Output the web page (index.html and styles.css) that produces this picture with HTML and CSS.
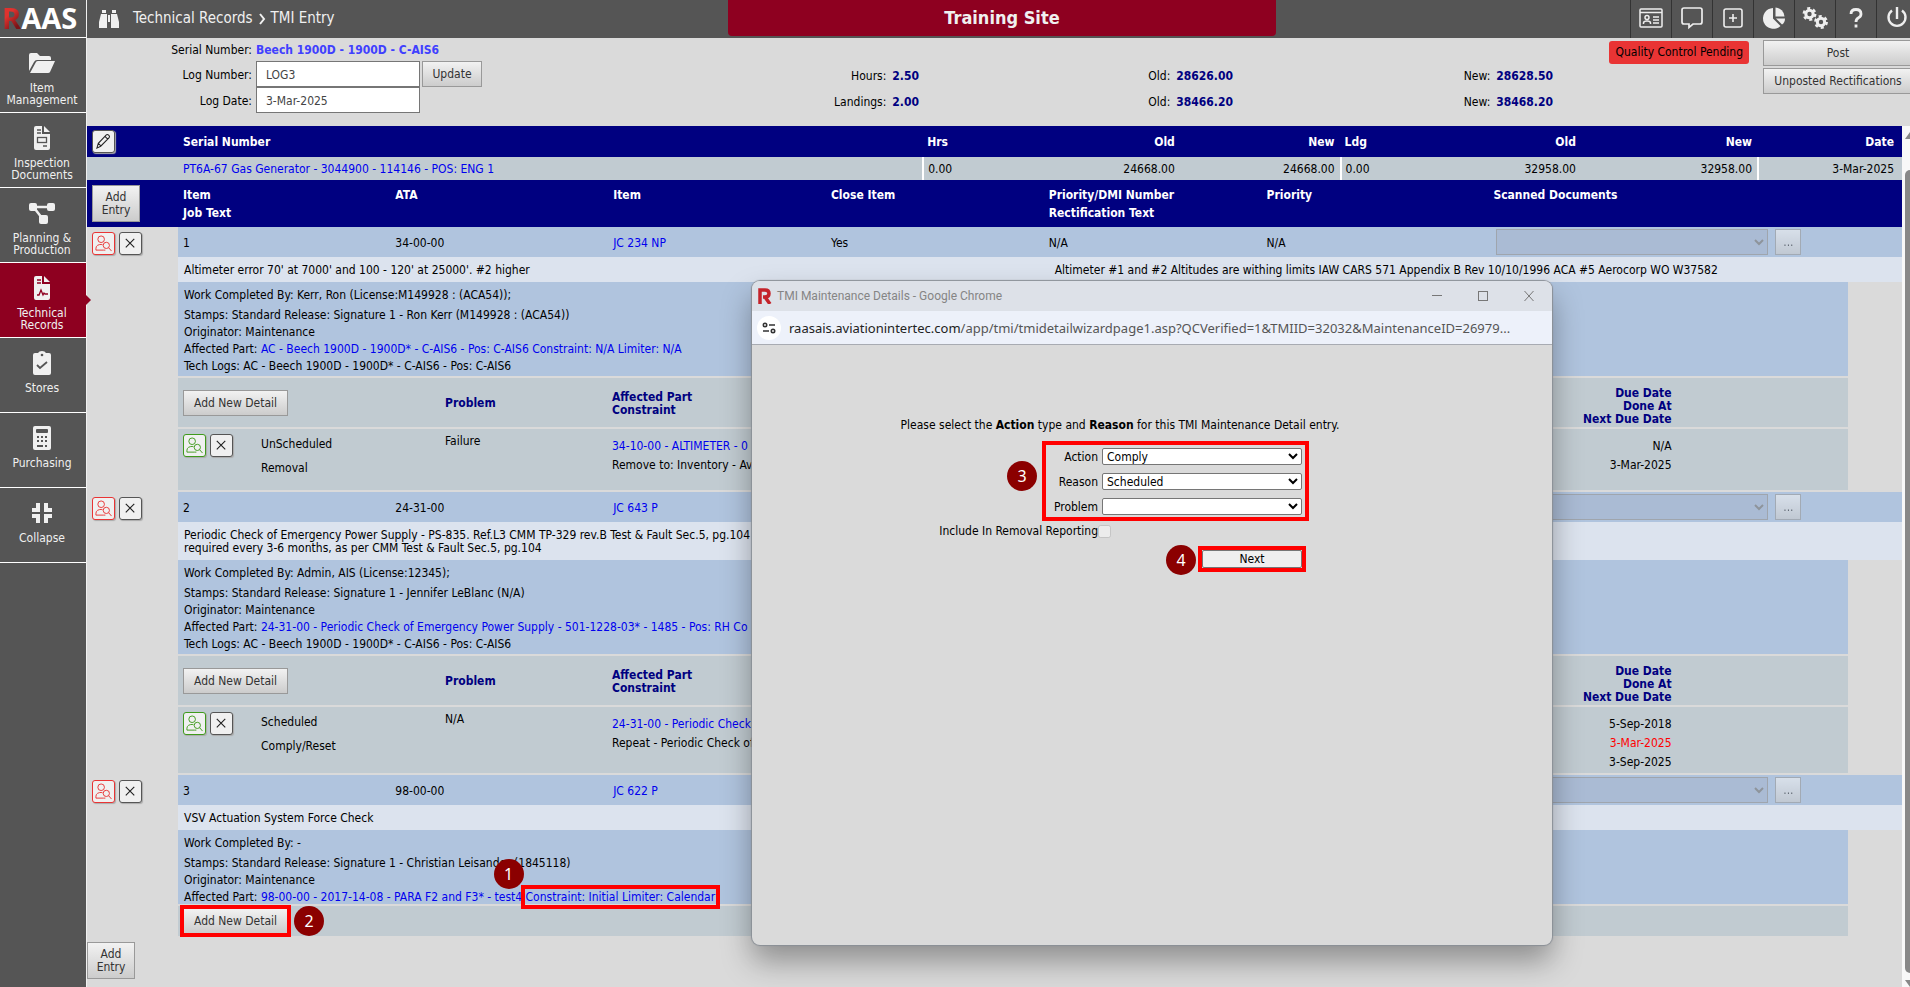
FILE: index.html
```html
<!DOCTYPE html>
<html lang="en">
<head>
<meta charset="utf-8">
<title>TMI Entry</title>
<link rel="stylesheet" href="styles.css">
</head>
<body>
<svg class="defs" aria-hidden="true">
  <symbol id="i-person" viewBox="0 0 18 18"><g fill="none" stroke="currentColor" stroke-width="1"><circle cx="6.500" cy="4.500" r="3.500"/><path d="M9 16H1v-2c0-3 3-4 5.500-4l1.500.3"/><circle cx="12" cy="11" r="3.300"/><path d="M14.500 13.500l3 3.500"/><path d="M9 16h2"/></g></symbol>
  <symbol id="i-x" viewBox="0 0 18 18"><path d="M4 4l9 9M13 4l-9 9" fill="none" stroke="#222" stroke-width="1.200"/></symbol>
</svg>
<div class="app">
  <nav class="side">
    <a class="logo" href="#"><span>R</span>AAS</a>
    <a class="nav" href="#"><svg viewBox="0 0 28 24"><path d="M1 20V4q0-2 2-2h6l3 3h9q2 0 2 2v2H9q-2 0-3 2z"/><path d="M2 22l6-11q.5-1 2-1h17l-5 11q-.5 1-2 1z"/></svg>Item<br>Management</a>
    <a class="nav" href="#"><svg viewBox="0 0 28 24"><path d="M8 0h6v8h8v14q0 2-2 2H8q-2 0-2-2V2q0-2 2-2z"/><path d="M16 0v6h6z"/><path d="M9 4h4M9 7h4M15 20h4" stroke="#555" stroke-width="1.300"/><rect x="9.500" y="11.500" width="9" height="5" fill="none" stroke="#555" stroke-width="1.300"/></svg>Inspection<br>Documents</a>
    <a class="nav" href="#"><svg viewBox="0 0 28 24"><rect x="1" y="2" width="8" height="8" rx="2"/><rect x="19" y="2" width="8" height="8" rx="2"/><rect x="11" y="14" width="9" height="9" rx="2"/><path d="M8 6h12M7 8l7 9" stroke="#f0f0f0" stroke-width="2.500"/></svg>Planning &amp;<br>Production</a>
    <a class="nav active" href="#"><svg viewBox="0 0 28 24"><path d="M8 0h6v8h8v14q0 2-2 2H8q-2 0-2-2V2q0-2 2-2z"/><path d="M16 0v6h6z"/><path d="M9 4h4M9 7h4" stroke="#8e0020" stroke-width="1.300"/><path d="M9 19h2l2-5 2 5 1-2 1 1h3" fill="none" stroke="#8e0020" stroke-width="1.300"/></svg>Technical<br>Records</a>
    <a class="nav" href="#"><svg viewBox="0 0 28 24"><path d="M7 2h3q1-2 4-2t4 2h3q2 0 2 2v18q0 2-2 2H7q-2 0-2-2V4q0-2 2-2z"/><circle cx="14" cy="4" r="1.300" fill="#555"/><path d="M9 14l3 3 7-6" fill="none" stroke="#555" stroke-width="1.800"/></svg>Stores</a>
    <a class="nav" href="#"><svg viewBox="0 0 28 24"><rect x="5" y="0" width="18" height="24" rx="2"/><rect x="8" y="3" width="12" height="4" rx="1" fill="#555"/><path d="M9 11h2M13 11h2M17 11h2M9 15h2M13 15h2M17 15h2M9 20h6M17 20h2" stroke="#555" stroke-width="2"/></svg>Purchasing</a>
    <a class="nav" href="#"><svg viewBox="0 0 28 24"><path d="M10 2v7H4M18 2v7h6M10 22v-7H4M18 22v-7h6" fill="none" stroke="#f0f0f0" stroke-width="4"/></svg>Collapse</a>
  </nav>
  <div class="main">
    <header class="top">
      <div class="crumbs">
        <svg width="22" height="20" viewBox="0 0 22 20" fill="#f0f0f0"><path d="M4 1h4v3H4zM14 1h4v3h-4zM3 5h6v14H1v-6zM13 5h6l2 8v6h-8zM10 6h2v7h-2z"/></svg>
        <a href="#">Technical Records</a><svg class="chev" viewBox="0 0 8 12"><path d="M1 1l4 5-4 5" fill="none" stroke="#f0f0f0" stroke-width="2"/></svg><span>TMI Entry</span>
      </div>
      <div class="site">Training Site</div>
      <div class="tools">
        <button aria-label="Profile"><svg viewBox="0 0 24 24" fill="none" stroke="#eee" stroke-width="1.500"><rect x="1" y="3" width="22" height="18" rx="1"/><path d="M1 6.500h22"/><circle cx="8" cy="11.500" r="2"/><path d="M4.500 18v-1q0-2 3.500-2t3.500 2v1M14 11h6M14 14h6M14 17h6"/></svg></button>
        <button aria-label="Messages"><svg viewBox="0 0 24 24" fill="none" stroke="#eee" stroke-width="1.700"><path d="M4 2h16q2 0 2 2v12q0 2-2 2h-7l-4 3.500V18H4q-2 0-2-2V4q0-2 2-2z"/></svg></button>
        <button aria-label="Add"><svg viewBox="0 0 24 24" fill="none" stroke="#eee" stroke-width="1.600"><rect x="3" y="3" width="18" height="18" rx="2"/><path d="M12 8v8M8 12h8"/></svg></button>
        <button aria-label="Reports"><svg viewBox="0 0 24 24" fill="#eee"><path d="M11 2v10.500l7.500 7.500A10.400 10.400 0 1 1 11 2z"/><path d="M13.500 1.500a9.500 9.500 0 0 1 9 9h-9z"/><path d="M14 12.500h9q0 4-3 6z"/></svg></button>
        <button aria-label="Settings"><svg class="wide" viewBox="0 0 26 24" fill="none" stroke="#eee"><circle cx="7.500" cy="8" r="3.700" stroke-width="3"/><circle cx="7.500" cy="8" r="5.700" stroke-width="2.500" stroke-dasharray="3 2.970"/><circle cx="19" cy="16" r="3.700" stroke-width="3"/><circle cx="19" cy="16" r="5.700" stroke-width="2.500" stroke-dasharray="3 2.970"/></svg></button>
        <button aria-label="Help"><svg viewBox="0 0 24 24" fill="none" stroke="#eee" stroke-width="2.800"><path d="M7 8q0-4.500 5-4.500T17 8q0 2.500-2.500 3.700T12 16M12 18.500v3"/></svg></button>
        <button aria-label="Log out"><svg viewBox="0 0 24 24" fill="none" stroke="#eee" stroke-width="2.400"><path d="M12 1v12M7 4.500a8.500 8.500 0 1 0 10 0"/></svg></button>
      </div>
    </header>

    <form class="log" onsubmit="return false">
      <div class="fields">
        <span class="lab">Serial Number:</span><a class="serial" href="#">Beech 1900D - 1900D - C-AIS6</a>
        <label class="lab" for="ln">Log Number:</label><div class="inrow"><input id="ln" value="LOG3"><button class="btn upd">Update</button></div>
        <label class="lab" for="ld">Log Date:</label><div class="inrow"><input id="ld" value="3-Mar-2025"></div>
      </div>
      <dl class="totals t1"><dt>Hours:</dt><dd>2.50</dd><dt>Landings:</dt><dd>2.00</dd></dl>
      <dl class="totals t2"><dt>Old:</dt><dd>28626.00</dd><dt>Old:</dt><dd>38466.20</dd></dl>
      <dl class="totals t3"><dt>New:</dt><dd>28628.50</dd><dt>New:</dt><dd>38468.20</dd></dl>
      <div class="qcwrap"><span class="qc">Quality Control Pending</span></div>
      <div class="acts"><button class="btn">Post</button><button class="btn">Unposted Rectifications</button></div>
    </form>

    <div class="scroller">
      <div class="content">
        <table class="parts">
          <colgroup><col class="p0"><col class="p1"><col class="p2"><col class="p3"><col class="p4"><col class="p5"><col class="p6"><col class="p7"><col></colgroup>
          <tr><th><button class="ib" aria-label="Edit"><svg viewBox="0 0 18 18"><path d="M2 16l1.500-5L12 2q1-1 2.500.3T15 5l-9 9zM10.500 3.500l3 3M3.500 11l3 3" fill="none" stroke="#222" stroke-width="1.100"/></svg></button></th><th>Serial Number</th><th>Hrs</th><th class="r">Old</th><th class="r">New</th><th>Ldg</th><th class="r">Old</th><th class="r">New</th><th class="r">Date</th></tr>
          <tr><td></td><td><a href="#">PT6A-67 Gas Generator - 3044900 - 114146 - POS: ENG 1</a></td><td class="w">0.00</td><td class="r">24668.00</td><td class="r">24668.00</td><td class="w">0.00</td><td class="r">32958.00</td><td class="r">32958.00</td><td class="r w">3-Mar-2025</td></tr>
        </table>

        <table class="items">
          <colgroup><col class="c0"><col class="c1"><col class="c2"><col class="c2"><col class="c2"><col class="c2"><col class="c6"><col></colgroup>
          <tr class="head"><th><button class="btn two">Add<br>Entry</button></th><th>Item<br>Job Text</th><th>ATA</th><th>Item</th><th>Close Item</th><th>Priority/DMI Number<br>Rectification Text</th><th>Priority</th><th>Scanned Documents</th></tr>

          <tr class="item"><td><button class="ib red" aria-label="Inspect"><svg><use href="#i-person"/></svg></button><button class="ib" aria-label="Delete"><svg><use href="#i-x"/></svg></button></td><td>1</td><td>34-00-00</td><td><a href="#">JC 234 NP</a></td><td>Yes</td><td>N/A</td><td>N/A</td><td><div class="scan"><select disabled aria-label="Scanned documents"></select><button class="btn" disabled>...</button></div></td></tr>
          <tr class="job"><td></td><td colspan="4">Altimeter error 70' at 7000' and 100 - 120' at 25000'. #2 higher</td><td colspan="3" class="rect">Altimeter #1 and #2 Altitudes are withing limits IAW CARS 571 Appendix B Rev 10/10/1996 ACA #5 Aerocorp WO W37582</td></tr>
          <tr><td></td><td colspan="7" class="block">
            <div class="work"><p class="by">Work Completed By: Kerr, Ron (License:M149928 : (ACA54));</p><p>Stamps: Standard Release: Signature 1 - Ron Kerr (M149928 : (ACA54))</p><p>Originator: Maintenance</p><p>Affected Part: <a href="#">AC - Beech 1900D - 1900D* - C-AIS6 - Pos: C-AIS6 Constraint: N/A Limiter: N/A</a></p><p>Tech Logs: AC - Beech 1900D - 1900D* - C-AIS6 - Pos: C-AIS6</p></div>
            <table class="det">
              <colgroup><col class="d0"><col class="d1"><col class="d2"><col class="d3"><col class="d4"><col></colgroup>
              <tr class="dh"><th colspan="2"><button class="btn add">Add New Detail</button></th><th>Problem</th><th>Affected Part<br>Constraint</th><th class="r">Due Date<br>Done At<br>Next Due Date</th><th></th></tr>
              <tr class="dr"><td><div class="ibs"><button class="ib green" aria-label="Inspect"><svg><use href="#i-person"/></svg></button><button class="ib" aria-label="Delete"><svg><use href="#i-x"/></svg></button></div></td><td class="ty">UnScheduled<br>Removal</td><td>Failure</td><td class="ln"><a href="#">34-10-00 - ALTIMETER - 0</a><br>Remove to: Inventory - Av</td><td class="r ln">N/A<br>3-Mar-2025</td><td></td></tr>
            </table></td></tr>

          <tr class="item"><td><button class="ib red" aria-label="Inspect"><svg><use href="#i-person"/></svg></button><button class="ib" aria-label="Delete"><svg><use href="#i-x"/></svg></button></td><td>2</td><td>24-31-00</td><td><a href="#">JC 643 P</a></td><td></td><td></td><td></td><td><div class="scan"><select disabled aria-label="Scanned documents"></select><button class="btn" disabled>...</button></div></td></tr>
          <tr class="job"><td></td><td colspan="4">Periodic Check of Emergency Power Supply - PS-835. Ref.L3 CMM TP-329 rev.B Test &amp; Fault Sec.5, pg.104<br>required every 3-6 months, as per CMM Test &amp; Fault Sec.5, pg.104</td><td colspan="3"></td></tr>
          <tr><td></td><td colspan="7" class="block">
            <div class="work"><p class="by">Work Completed By: Admin, AIS (License:12345);</p><p>Stamps: Standard Release: Signature 1 - Jennifer LeBlanc (N/A)</p><p>Originator: Maintenance</p><p>Affected Part: <a href="#">24-31-00 - Periodic Check of Emergency Power Supply - 501-1228-03* - 1485 - Pos: RH Co</a></p><p>Tech Logs: AC - Beech 1900D - 1900D* - C-AIS6 - Pos: C-AIS6</p></div>
            <table class="det">
              <colgroup><col class="d0"><col class="d1"><col class="d2"><col class="d3"><col class="d4"><col></colgroup>
              <tr class="dh"><th colspan="2"><button class="btn add">Add New Detail</button></th><th>Problem</th><th>Affected Part<br>Constraint</th><th class="r">Due Date<br>Done At<br>Next Due Date</th><th></th></tr>
              <tr class="dr"><td><div class="ibs"><button class="ib green" aria-label="Inspect"><svg><use href="#i-person"/></svg></button><button class="ib" aria-label="Delete"><svg><use href="#i-x"/></svg></button></div></td><td class="ty">Scheduled<br>Comply/Reset</td><td>N/A</td><td class="ln"><a href="#">24-31-00 - Periodic Check</a><br>Repeat - Periodic Check of</td><td class="r ln">5-Sep-2018<br><span class="late">3-Mar-2025</span><br>3-Sep-2025</td><td></td></tr>
            </table></td></tr>

          <tr class="item"><td><button class="ib red" aria-label="Inspect"><svg><use href="#i-person"/></svg></button><button class="ib" aria-label="Delete"><svg><use href="#i-x"/></svg></button></td><td>3</td><td>98-00-00</td><td><a href="#">JC 622 P</a></td><td></td><td></td><td></td><td><div class="scan"><select disabled aria-label="Scanned documents"></select><button class="btn" disabled>...</button></div></td></tr>
          <tr class="job"><td></td><td colspan="4">VSV Actuation System Force Check</td><td colspan="3"></td></tr>
          <tr><td></td><td colspan="7" class="block">
            <div class="work short"><p class="by">Work Completed By: -</p><p>Stamps: Standard Release: Signature 1 - Christian Leisander (1845118)</p><p>Originator: Maintenance</p><p>Affected Part: <a href="#">98-00-00 - 2017-14-08 - PARA F2 and F3* - test4 <span class="mark">Constraint: Initial Limiter: Calendar<b class="num n1">1</b></span></a></p></div>
            <table class="det">
              <tr class="last"><td><span class="mark"><button class="btn add">Add New Detail</button><b class="num n2">2</b></span></td></tr>
            </table></td></tr>
        </table>
        <button class="btn two foot">Add<br>Entry</button>
      </div>
      <div class="bar"><i class="up"></i><i class="thumb"></i><i class="down"></i></div>
    </div>
  </div>
</div>

<section class="popup">
  <div class="ptitle"><svg class="rlogo" viewBox="0 0 14 16"><path d="M2 16V2h5q4 0 4 3.500T7 9H5M7 9l5 7" fill="none" stroke="#c4232a" stroke-width="3.500"/></svg><span>TMI Maintenance Details - Google Chrome</span>
    <svg class="wc" viewBox="0 0 104 12" fill="none" stroke="#777"><path d="M0 5.500h10M92.500 1l9 10M101.500 1l-9 10"/><rect x="46.500" y="1.500" width="9" height="9"/></svg></div>
  <div class="url"><span class="tune"><svg viewBox="0 0 14 14" fill="none" stroke="#333" stroke-width="1.600"><circle cx="3" cy="4" r="1.700"/><path d="M7 4h6M1 10h6"/><circle cx="11" cy="10" r="1.700"/></svg></span><span class="addr"><b>raasais.aviationintertec.com</b>/app/tmi/tmidetailwizardpage1.asp?QCVerified=1&amp;TMIID=32032&amp;MaintenanceID=26979...</span></div>
  <form class="wiz" onsubmit="return false">
    <p>Please select the <b>Action</b> type and <b>Reason</b> for this TMI Maintenance Detail entry.</p>
    <div class="mark trio"><b class="num n3">3</b>
      <label for="a">Action</label><select id="a"><option>Comply</option></select>
      <label for="r">Reason</label><select id="r"><option>Scheduled</option></select>
      <label for="p">Problem</label><select id="p"><option></option></select>
    </div>
    <div class="inc"><label for="i">Include In Removal Reporting</label><input id="i" type="checkbox" disabled></div>
    <div class="mark nx"><b class="num n4">4</b><button class="next">Next</button></div>
  </form>
</section>
</body>
</html>
```
FILE: styles.css
```css
* { box-sizing: border-box; }
html, body { height: 100%; }
body { margin: 0; overflow: hidden; background: #dadada; color: #000; font: 12px/13px "DejaVu Sans Condensed", "Noto Sans", sans-serif; position: relative; }
a { color: #0000ee; text-decoration: none; }
p { margin: 0; }
button, input, select { font: inherit; margin: 0; }
.defs { position: absolute; width: 0; height: 0; }
.app { display: flex; height: 100%; }

/* sidebar */
.side { width: 87px; flex: none; background: #555; border-right: 1px solid #f0f0f0; display: flex; flex-direction: column; }
.logo { height: 38px; border-bottom: 1px solid #fff; color: #fff; font: 700 29px/36px "Open Sans", sans-serif; padding-left: 2px; flex: none; }
.logo span { background: linear-gradient(135deg, #e0322e 40%, #7a1418 75%); -webkit-background-clip: text; background-clip: text; color: transparent; }
.nav { height: 75px; flex: none; border-bottom: 1px solid #fff; color: #f0f0f0; text-align: center; line-height: 12px; position: relative; padding: 13px 2px 0 0; }
.nav svg { display: block; width: 28px; height: 24px; margin: 0 auto 7px; fill: #f0f0f0; }
.nav.active { background: #8e0020; }
.nav.active::after { content: ""; position: absolute; left: 86px; top: 32px; border: 5px solid transparent; border-left-color: #8e0020; border-right: 0; z-index: 1; }

.main { flex: 1; min-width: 0; display: flex; flex-direction: column; }
.top { height: 38px; flex: none; background: #555; color: #f0f0f0; display: grid; grid-template-columns: 641px 1fr 634px; }
.crumbs { display: flex; align-items: center; padding-left: 11px; padding-bottom: 1px; font-size: 15px; }
.crumbs a, .crumbs span { color: inherit; }
.crumbs a { margin-left: 13px; }
.chev { width: 8px; height: 12px; margin: 0 4px 0 6px; }
.site { background: #8e0020; height: 36px; border-radius: 0 0 4px 4px; text-align: center; font: bold 18px/35px "DejaVu Sans Condensed", "Noto Sans", sans-serif; }
.tools { display: flex; justify-content: flex-end; overflow: hidden; }
.tools button { width: 41px; flex: none; border: 0; border-left: 1px solid #333; background: none; padding: 0 0 2px; display: grid; place-items: center; }
.tools button:last-child { width: 34px; overflow: hidden; padding-left: 6px; }
.tools svg { width: 24px; height: 24px; }
.tools .wide { width: 26px; }

/* log header */
.log { height: 88px; flex: none; display: flex; overflow: hidden; }
.fields { width: 520px; display: grid; grid-template-columns: 165px 1fr; column-gap: 4px; grid-template-rows: 23px 26px 26px; align-items: center; align-content: start; }
.lab, .serial { padding-top: 2px; }
.lab { text-align: right; }
.serial { color: #4040ff; font-weight: bold; }
.inrow { display: flex; gap: 2px; }
.inrow input { width: 164px; height: 26px; border: 1px solid #767676; background: #fff; color: #444; padding: 2px 9px 0; border-radius: 0; }
.btn { border: 1px solid #999; background: linear-gradient(#f2f2f2, #cccccc); color: #333; padding: 0; height: 26px; border-radius: 0; font-weight: normal; }
.upd { width: 60px; }
.totals { margin: 0; padding-top: 25px; display: grid; grid-template-columns: 1fr auto; grid-auto-rows: 26px; column-gap: 6px; align-items: center; align-content: start; }
.totals dt { text-align: right; }
.totals dd { margin: 0; color: #000080; font-weight: bold; }
.t1 { width: 312px; }
.t2 { width: 314px; }
.t3 { width: 320px; }
.qcwrap { flex: 1; text-align: right; padding-top: 3px; }
.qc { display: inline-block; background: #e93434; border-radius: 3px; line-height: 23px; padding: 0 6px; white-space: nowrap; }
.acts { width: 147px; margin-left: 14px; display: grid; align-content: start; gap: 2px; padding-top: 2px; }
.acts .btn { width: 150px; }

/* scroll area */
.scroller { flex: 1; min-height: 0; display: flex; }
.content { flex: 1; min-width: 0; overflow: hidden; }
.bar { width: 8px; flex: none; background: #f8f8f8; display: flex; flex-direction: column; align-items: flex-end; overflow: hidden; padding: 6px 0 0; }
.bar .up, .bar .down { border: 5px solid transparent; border-right: 0; width: 5px; flex: none; }
.bar .up { border-bottom: 7px solid #888; border-top: 0; }
.bar .thumb { flex: 1; width: 5px; background: #888; border-radius: 5px 0 0 5px; margin: 31px 0 7px; }
.bar .down { border-top: 7px solid #888; border-bottom: 0; }

table { border-collapse: separate; border-spacing: 0; width: 100%; table-layout: fixed; }
th { text-align: left; font-weight: bold; }
td, th { padding: 0 0 0 5px; }
.r { text-align: right; }
.parts th { background: #000080; color: #fff; height: 31px; padding-top: 2px; }
.parts th:first-child { padding-top: 0; }
.parts td { background: #c1cbd1; height: 23px; padding-top: 2px; }
.parts .r { padding-right: 5px; }
.parts .r:last-child { padding-right: 8px; }
.parts .w { border-left: 2px solid #fff; padding-left: 4px; }
.p0 { width: 91px; } .p1 { width: 41%; } .p2 { width: 4%; } .p3 { width: 10.2%; } .p4 { width: 8.8%; }
.p5 { width: 5%; } .p6 { width: 8.3%; } .p7 { width: 9.7%; }

.c0 { width: 91px; } .c1 { width: 11.7%; } .c2 { width: 12%; } .c6 { width: 12.5%; }
.head th { background: #000080; color: #fff; height: 47px; vertical-align: top; line-height: 18px; padding-top: 6px; }
.head th:first-child { padding-top: 5px; }
.two { width: 48px; height: 37px; line-height: 13px; display: block; }
.item td { height: 30px; background: #b0c4de; padding-top: 2px; }
.item td:first-child, .job td:first-child { background: none; }
.item td:first-child { padding-top: 5px; vertical-align: top; }
.item td:last-child { padding-top: 0; }
.job td { background: #dce3ee; padding: 7px 0 5px 6px; white-space: nowrap; }
.job .rect { padding-left: 11px; }
.scan { display: flex; gap: 7px; padding-left: 3px; }
.scan select { width: 272px; height: 26px; border: 1px solid #999; background: #a8b8d0; border-radius: 0; padding: 0; }
.scan .btn { width: 26px; opacity: .6; line-height: 20px; }
.ib { width: 23px; height: 23px; padding: 2px; border: 1px solid #555; border-radius: 3px; background: #f0f0f0; box-shadow: 1px 1px 1px #aaa; display: inline-block; vertical-align: top; margin-right: 4px; }
.ib svg { width: 17px; height: 17px; display: block; }
.red { border-color: #e93434; color: #e93434; }
.green { border-color: #3f9a1c; color: #3f9a1c; }
.block { padding: 0; }
.work, .det { width: calc(100% - 54px); }
.work { background: #b0c4de; height: 94px; padding: 5px 0 0 6px; line-height: 17px; white-space: nowrap; }
.work.short { height: 74px; }
.work .by { margin-bottom: 3px; }
.det { border-spacing: 0 2px; }
.det td, .det th { background: #c1cbd1; }
.det th { color: #000080; padding-top: 2px; }
.det th:first-child { padding-top: 1px; }
.dh th { height: 49px; }
.det .dh .r { padding-top: 8px; }
.add { width: 105px; display: block; }
.dr td { vertical-align: top; padding-top: 6px; padding-bottom: 5px; white-space: nowrap; }
.dr td:first-child { padding-top: 5px; padding-bottom: 6px; }
.dr .ty { line-height: 24px; padding-top: 3px; padding-bottom: 10px; }
.dr .ln { line-height: 19px; padding-top: 8px; padding-bottom: 1px; }
.det .r { padding-right: 2px; }
.ibs { display: flex; height: 50px; }
.d0 { width: 78px; } .d1 { width: 184px; } .d2 { width: 167px; } .d3 { width: 38%; } .d4 { width: 432px; }
.late { color: #f00; }
.last td { height: 30px; }
.foot { margin-top: 4px; }

/* call-outs */
.mark { position: relative; outline: 4px solid #f00; }
.num { position: absolute; width: 30px; height: 30px; border-radius: 50%; background: #8b0000; color: #fff; text-align: center; font: 16px/30px "Noto Sans", sans-serif; }
.work .mark { outline-offset: 1px; }
.n1 { left: -32px; top: -31px; }
.last .mark { display: inline-block; vertical-align: middle; outline-offset: -1px; }
.n2 { left: 111px; top: -2px; }
.n3 { left: -39px; top: 16px; }
.n4 { left: -36px; top: -5px; }

/* popup window */
.popup { position: absolute; left: 752px; top: 281px; width: 800px; height: 664px; background: #dadada; border-radius: 8px; overflow: visible; box-shadow: 0 0 1px 1px #8a8f96, 0 16px 30px rgba(0, 0, 0, .35); }
.ptitle { height: 30px; background: #dde1e8; border-radius: 8px 8px 0 0; display: flex; align-items: center; padding: 0 16px 0 6px; color: #858585; font: 12px/16px Roboto, sans-serif; }
.rlogo { width: 14px; height: 16px; margin-right: 5px; }
.wc { width: 104px; height: 12px; margin-left: auto; }
.url { height: 34px; background: #edf1fa; border-bottom: 1px solid #a8abb2; display: flex; align-items: center; gap: 8px; padding-left: 5px; font: 13px/20px "Noto Sans", sans-serif; color: #555; white-space: nowrap; }
.url b { font-weight: normal; color: #222; }
.tune { width: 24px; height: 24px; border-radius: 50%; background: #fff; display: grid; place-items: center; }
.tune svg { width: 14px; height: 14px; }
.wiz { padding-top: 74px; }
.wiz p { text-align: center; padding-right: 64px; }
.wiz label { padding-top: 1px; }
.wiz select { width: 200px; height: 17px; border: 1px solid #767676; border-radius: 2px; background: #fff; padding: 0; }
.trio { margin: 13px 0 0 294px; width: 259px; height: 72px; display: grid; grid-template-columns: 52px 200px; column-gap: 4px; row-gap: 8px; padding-top: 3px; align-content: start; align-items: center; text-align: right; }
.inc { display: flex; align-items: center; margin: 7px 0 0; width: 359px; justify-content: flex-end; }
.inc input { width: 13px; height: 13px; }
.nx { margin: 12px 0 0 450px; width: 100px; height: 18px; }
.next { width: 100%; height: 18px; border: 1px solid #767676; border-radius: 2px; background: #efefef; padding: 0; display: block; }
```
